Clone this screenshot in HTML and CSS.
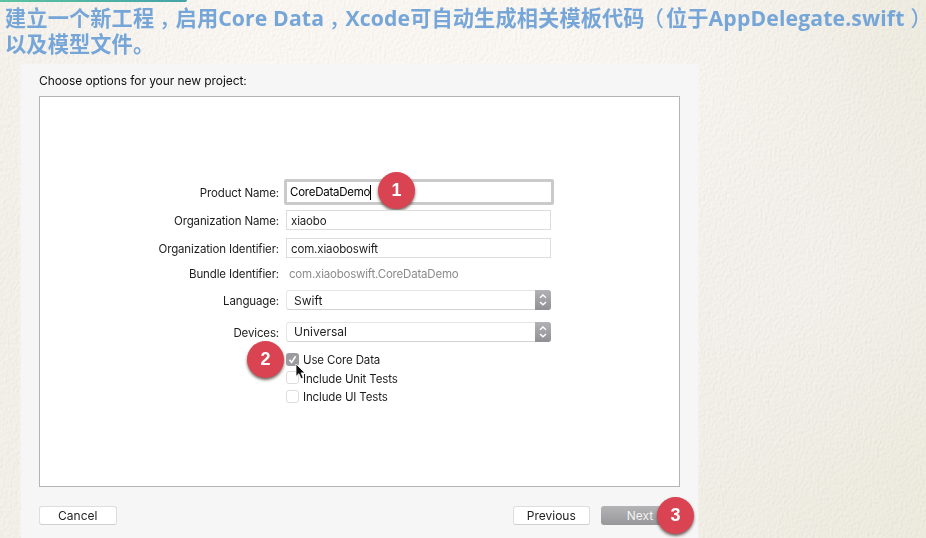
FILE: index.html
```html
<!DOCTYPE html>
<html lang="zh-CN">
<head>
<meta charset="utf-8">
<title>Core Data</title>
<link rel="stylesheet" href="styles.css">
</head>
<body>
<svg class="paper" width="926" height="538" aria-hidden="true">
  <filter id="weave" x="0" y="0" width="100%" height="100%">
    <feTurbulence type="fractalNoise" baseFrequency="0.42 0.3" numOctaves="3" seed="4" result="n"/>
    <feDiffuseLighting in="n" surfaceScale="0.65" lighting-color="#fffcf6"><feDistantLight azimuth="220" elevation="62"/></feDiffuseLighting>
  </filter>
  <rect width="926" height="538" filter="url(#weave)"/>
</svg>
<div class="accent"></div>
<h1 class="title"><span class="line">建立一个新工程<span class="comma">，</span>启用Core Data<span class="comma">，</span>Xcode可自动生成相关模板代码<span class="open">（</span>位于AppDelegate.swift<span class="close">）</span></span><span class="line">以及模型文件。</span></h1>
<main class="window">
  <p class="prompt"><span>Choose options for your new project:</span></p>
  <section class="sheet">
    <div class="form">
      <label>Product Name:</label>
      <div class="cell"><div class="input focused"><span class="pname">CoreDataDemo</span><i class="caret"></i></div><b class="badge one">1</b></div>
      <label>Organization Name:</label>
      <div class="cell"><div class="input">xiaobo</div></div>
      <label>Organization Identifier:</label>
      <div class="cell"><div class="input">com.xiaoboswift</div></div>
      <label>Bundle Identifier:</label>
      <div class="cell"><span class="bundle">com.xiaoboswift.CoreDataDemo</span></div>
      <label>Language:</label>
      <div class="cell"><div class="select"><span>Swift</span><svg class="step" viewBox="0 0 16 20"><path d="M5 7.8 8 5l3 2.8M5 12l3 2.8 3-2.8"/></svg></div></div>
      <label>Devices:</label>
      <div class="cell"><div class="select"><span>Universal</span><svg class="step" viewBox="0 0 16 20"><path d="M5 7.8 8 5l3 2.8M5 12l3 2.8 3-2.8"/></svg></div></div>
    </div>
    <div class="checks">
      <div class="check"><i class="box on"><svg viewBox="0 0 13 13"><path d="m3.4 6.8 2.2 2.6 4-6.2"/></svg></i><span>Use Core Data</span></div>
      <div class="check"><i class="box"></i><span>Include Unit Tests</span></div>
      <div class="check"><i class="box"></i><span>Include UI Tests</span></div>
      <b class="badge two">2</b>
      <svg class="cursor" viewBox="0 0 12 18"><path d="M1 1v12.4l2.9-2.7 2.2 5 2.2-1-2.2-4.8H10z"/></svg>
    </div>
  </section>
  <footer class="actions">
    <button class="cancel">Cancel</button>
    <button class="prev">Previous</button>
    <div class="nextwrap"><button class="next">Next</button><b class="badge three">3</b></div>
  </footer>
</main>
</body>
</html>
```
FILE: styles.css
```css
* { box-sizing: border-box; }
body {
  margin: 0;
  width: 926px;
  height: 538px;
  overflow: hidden;
  position: relative;
  isolation: isolate;
  font-family: Inter, "Liberation Sans", sans-serif;
  font-size: 12px;
  color: #1d1d1d;
  background:
    radial-gradient(ellipse 480px 330px at 400px 30px, #fdfaf7 35%, transparent),
    radial-gradient(ellipse 280px 240px at 760px 260px, #f3efeb 20%, transparent),
    linear-gradient(100deg, #f2efe8 0%, #f3f0e9 65%, #e9e6d6 100%);
}
.paper { position: absolute; inset: 0; z-index: -1; mix-blend-mode: soft-light; opacity: .4; }
.accent { width: 187px; height: 2px; background: linear-gradient(90deg, #5cc3a0, #43a3a8); border-radius: 0 0 3px 0; }
.title {
  margin: 0;
  height: 62px;
  padding: 3px 0 0 5px;
  font: bold 21.2px/26px "Open Sans", "Noto Sans CJK SC", sans-serif;
  letter-spacing: .13px;
  color: #76a6d8;
  white-space: nowrap;
}
.line { display: block; }
.comma, .open, .close { font-family: "Noto Sans CJK SC", sans-serif; font-weight: 500; line-height: 1; }
.comma { margin: 0 -5px 0 5px; }
.open { margin: 0 2px 0 -2px; }
.close { margin: 0 -6px 0 6px; }
.window { margin-left: 21px; width: 677px; height: 474px; padding: 0 19px 0 18px; background: #f6f6f6; box-shadow: 0 0 2px #f6f6f6; }
.prompt { margin: 0; height: 32px; line-height: 34px; letter-spacing: -.07px; color: #111; }
.sheet { width: 641px; height: 391px; border: 1px solid #b4b4b4; background: #fff; padding-top: 81px; }
.form {
  display: grid;
  grid-template-columns: 239px 270px;
  grid-template-rows: 28px 28px 28px 22px 32px 31px;
  column-gap: 5px;
  align-items: center;
}
.form label { text-align: right; white-space: nowrap; padding-top: 2px; }
.form label, .input, .bundle, .check span { font-size: 11.5px; letter-spacing: -.14px; }
.cell { position: relative; display: flex; align-items: center; padding-left: 2px; white-space: nowrap; }
.input { width: 265px; height: 20px; border: 1px solid #dcdcdc; padding-left: 4px; line-height: 20px; background: #fff; }
.input.focused { margin-left: -2px; width: 270px; height: 26px; border: 3px solid #cacaca; border-radius: 2px; padding-left: 3px; line-height: 21px; color: #000; display: flex; align-items: center; }
.pname { padding-top: 1px; letter-spacing: -.25px; }
.caret { width: 1px; height: 15px; background: #000; }
.bundle { color: #8b8b8b; padding: 2px 0 0 3px; }
.form .bundle { letter-spacing: -.2px; }
.select { width: 265px; height: 20px; border: 1px solid #e6e6e6; border-bottom-color: #d2d2d2; border-radius: 3px; display: flex; justify-content: space-between; align-items: center; padding-left: 7px; }
.step { width: 16px; height: 20px; margin: -1px; background: linear-gradient(#b2b2b6, #8f8f94); border-radius: 0 3px 3px 0; fill: none; stroke: #fff; stroke-width: 1.5; }
.checks { position: relative; margin: 3px 0 0 246px; display: grid; grid-auto-rows: 18.6px; }
.check { display: flex; align-items: center; gap: 4px; }
.check span { padding-top: 2px; }
.box { width: 13px; height: 13px; border: 1px solid #dcdcdc; border-radius: 3px; background: #fff; }
.box.on { border: 0; background: #9c9ca0; }
.box svg { display: block; fill: none; stroke: #fff; stroke-width: 1.6; }
.cursor { position: absolute; left: 9px; top: 13px; width: 12px; height: 18px; fill: #111; stroke: #fff; stroke-width: .8; }
.badge {
  position: absolute;
  width: 37px;
  height: 37px;
  border-radius: 50%;
  background: #d94352;
  color: #fff;
  font: bold 18px/37px "Liberation Sans", sans-serif;
  text-align: center;
  box-shadow: 0 2px 3px rgba(70, 55, 45, .75);
}
.one { left: 94px; top: -7px; }
.two { left: -39px; top: -9px; }
.three { left: 56px; top: -9px; }
.actions { display: flex; padding-top: 19px; }
button { height: 19px; padding: 0; border: 1px solid #dedede; border-bottom-color: #cfcfcf; border-radius: 3px; background: #fff; font: 12px/17px Inter, sans-serif; color: #222; }
.cancel { width: 78px; margin-right: 396px; }
.prev { width: 78px; margin-right: 11px; }
.nextwrap { position: relative; }
.next { display: block; width: 78px; border: 0; color: #f3f3f3; background: linear-gradient(#b4b4b6, #98989b); }
```
